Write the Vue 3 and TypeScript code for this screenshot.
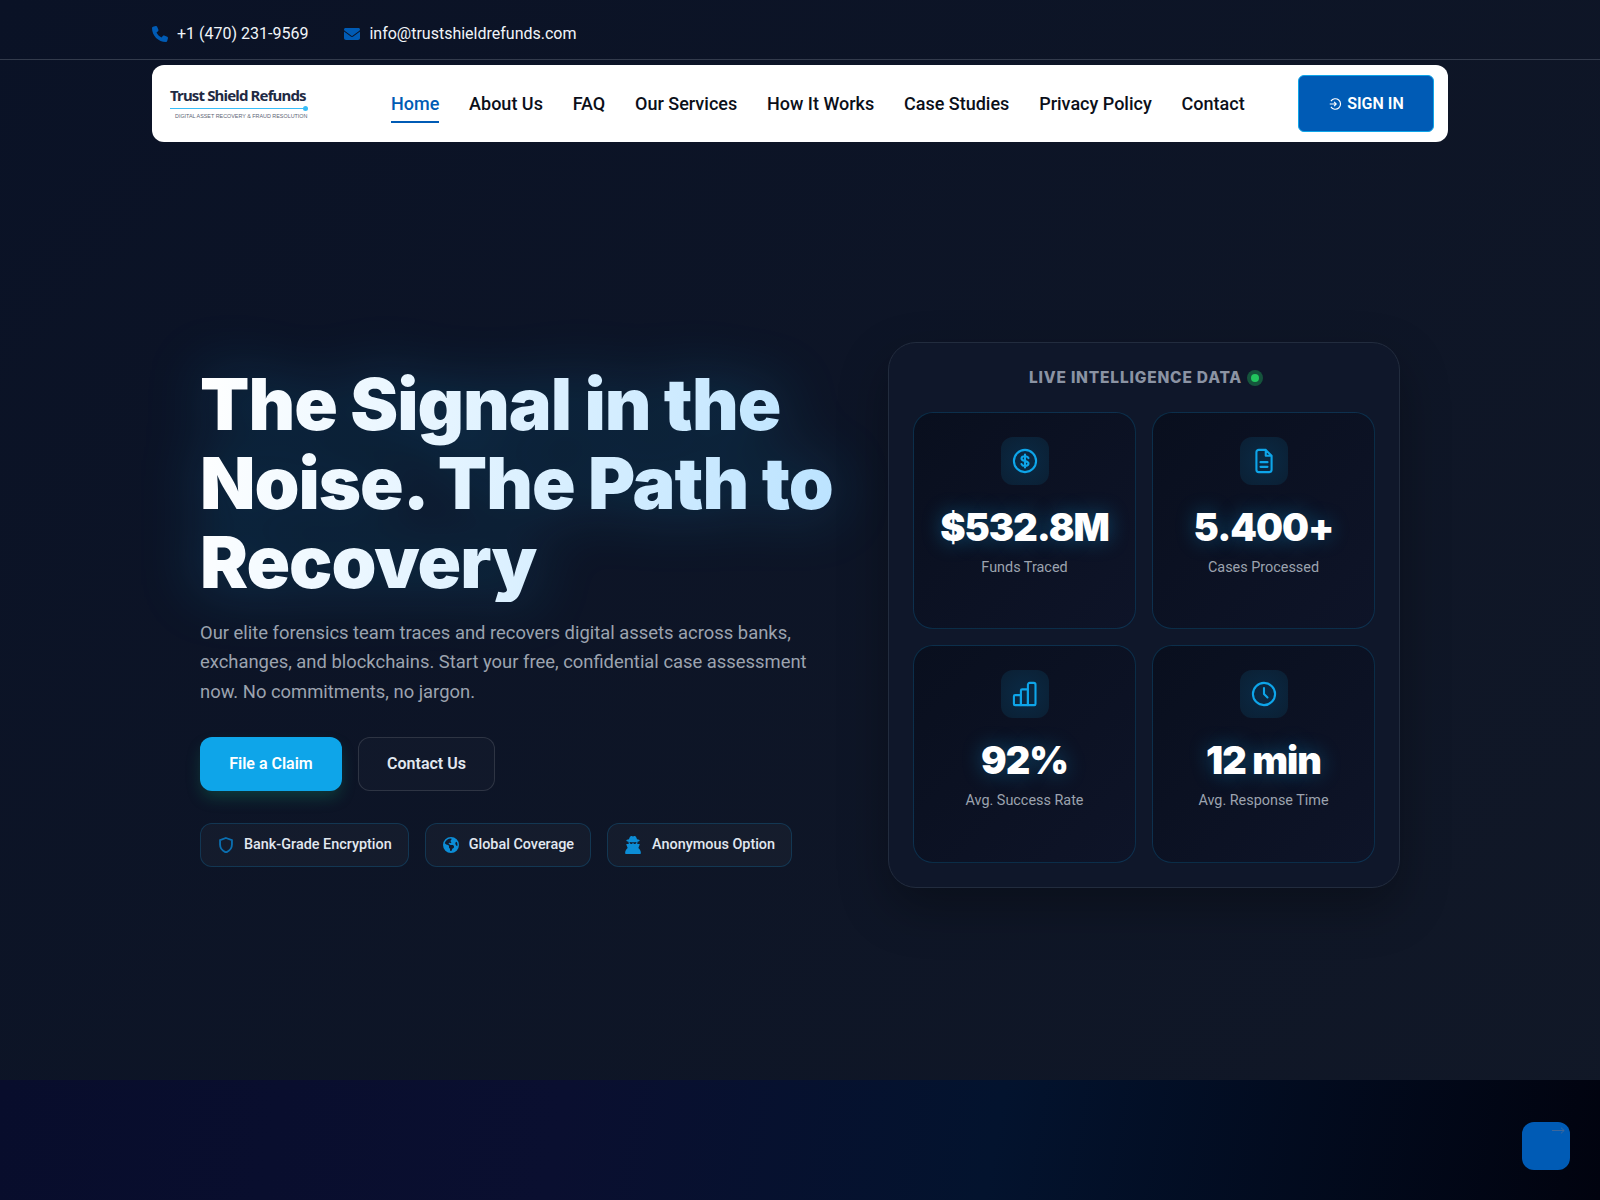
<template>
  <div class="page">
    <div class="topbar">
      <a class="topbar__item">
        <svg class="topbar__icon" viewBox="0 0 512 512"><path d="M164.9 24.6c-7.7-18.6-28-28.5-47.4-23.2l-88 24C12.1 30.2 0 46 0 64C0 311.4 200.6 512 448 512c18 0 33.8-12.1 38.6-29.5l24-88c5.3-19.4-4.6-39.7-23.2-47.4l-96-40c-16.3-6.8-35.2-2.1-46.3 11.6L304.7 368C234.3 334.7 177.3 277.7 144 207.3L193.3 167c13.7-11.2 18.4-30 11.6-46.3l-40-96z" /></svg>
        +1 (470) 231-9569
      </a>
      <a class="topbar__item">
        <svg class="topbar__icon" viewBox="0 0 512 512"><path d="M48 64C21.5 64 0 85.5 0 112c0 15.1 7.1 29.3 19.2 38.4L236.8 313.6c11.4 8.5 27 8.5 38.4 0L492.8 150.4c12.1-9.1 19.2-23.3 19.2-38.4c0-26.5-21.5-48-48-48H48zM0 176V384c0 35.3 28.7 64 64 64H448c35.3 0 64-28.7 64-64V176L294.4 339.2c-22.8 17.1-54 17.1-76.8 0L0 176z" /></svg>
        info@trustshieldrefunds.com
      </a>
    </div>

    <nav class="nav">
      <div class="logo">
        <div class="logo__name">Trust Shield Refunds</div>
        <div class="logo__rule"></div>
        <div class="logo__tag">DIGITAL ASSET RECOVERY &amp; FRAUD RESOLUTION</div>
      </div>
      <div class="nav__links">
        <a v-for="link in links" :key="link" class="nav__link" :class="{ active: link === 'Home' }">{{ link }}</a>
      </div>
      <button class="signin">
        <svg viewBox="0 0 24 24" class="signin__icon"><path d="M5 7a9 9 0 1 1 0 10M3 12h11M10.500 8.500 14 12l-3.500 3.500" /></svg>
        SIGN IN
      </button>
    </nav>

    <section class="hero">
      <div class="hero__left">
        <h1 class="hero__title">The Signal in the Noise. The Path to Recovery</h1>
        <p class="hero__text">
          Our elite forensics team traces and recovers digital assets across banks, exchanges, and blockchains. Start your free, confidential case assessment now. No commitments, no jargon.
        </p>
        <div class="hero__actions">
          <button class="btn btn--primary">File a Claim</button>
          <button class="btn btn--ghost">Contact Us</button>
        </div>
        <div class="badges">
          <div class="badge">
            <svg viewBox="3 1.500 18 21" class="badge__icon badge__icon--line"><path d="M12 2.800 19.800 5.500v6c0 5-3.300 8.500-7.800 10.300-4.500-1.800-7.800-5.300-7.800-10.300v-6z" /></svg>
            Bank-Grade Encryption
          </div>
          <div class="badge">
            <svg viewBox="0 0 512 512" class="badge__icon"><path d="M57.700 193l9.400 16.400c8.300 14.500 21.900 25.200 38 29.800L163 255.700c17.200 4.900 29 20.600 29 38.500v39.900c0 11 6.200 21 16 25.900s16 14.900 16 25.900v39c0 15.600 14.900 26.900 29.900 22.600c16.100-4.600 28.600-17.500 32.700-33.800l2.800-11.200c4.200-16.900 15.200-31.400 30.300-40l8.100-4.600c15-8.500 24.200-24.500 24.200-41.700v-8.300c0-12.700-5.100-24.900-14.100-33.900l-3.900-3.900c-9-9-21.200-14.100-33.900-14.100H257c-11.100 0-22.100-2.900-31.800-8.400l-34.500-19.700c-4.300-2.500-7.600-6.500-9.200-11.200c-3.200-9.600 1.100-20 10.200-24.500l5.900-3c6.600-3.300 14.300-3.900 21.300-1.500l23.200 7.700c8.200 2.700 17.200-.4 21.900-7.500c4.700-7 4.200-16.300-1.200-22.800l-13.600-16.300c-10-12-9.900-29.500 .3-41.300l15.700-18.300c8.800-10.300 10.200-25 3.500-36.700l-2.400-4.200c-3.500-.2-6.900-.3-10.400-.3C163.100 48 84.400 108.900 57.700 193zM464 256c0-36.800-9.600-71.400-26.400-101.500L412 164.800c-15.700 6.300-23.800 23.800-18.500 39.800l16.900 50.700c3.500 10.400 12 18.300 22.600 20.900l29.100 7.300c1.200-9 1.800-18.200 1.800-27.500zM0 256a256 256 0 1 1 512 0A256 256 0 1 1 0 256z" /></svg>
            Global Coverage
          </div>
          <div class="badge">
            <svg viewBox="0 0 448 512" class="badge__icon badge__icon--wide"><path d="M224 16c-6.700 0-10.800-2.800-15.500-6.100C201.900 5.400 194 0 176 0c-30.500 0-52 43.700-66 89.400C62.700 98.100 32 112.200 32 128c0 14.300 25 27.100 64.600 35.900c-.4 4-.6 8-.6 12.100c0 17 3.300 33.200 9.300 48H45.400C38 224 32 230 32 237.400c0 1.700 .3 3.400 1 5l38.800 96.900C28.200 371.800 0 423.800 0 482.300C0 498.700 13.300 512 29.700 512H418.300c16.400 0 29.700-13.300 29.700-29.700c0-58.500-28.200-110.400-71.700-143L415 242.400c.6-1.600 1-3.300 1-5c0-7.400-6-13.400-13.400-13.400H342.700c6-14.800 9.300-31 9.300-48c0-4.100-.2-8.100-.6-12.100C391 155.100 416 142.300 416 128c0-15.800-30.700-29.900-78-38.600C324 43.700 302.500 0 272 0c-18 0-25.900 5.400-32.500 9.900c-4.800 3.300-8.800 6.100-15.500 6.100zm56 208H267.600c-16.500 0-31.100-10.600-36.300-26.200c-2.300-7-12.200-7-14.500 0c-5.200 15.600-19.900 26.200-36.300 26.200H168c-22.100 0-40-17.900-40-40V169.600c28.200 4.100 61 6.400 96 6.400s67.800-2.300 96-6.400V184c0 22.100-17.900 40-40 40z" /></svg>
            Anonymous Option
          </div>
        </div>
      </div>

      <div class="panel">
        <div class="panel__title">LIVE INTELLIGENCE DATA <span class="panel__dot"></span></div>
        <div class="stats">
          <div v-for="stat in stats" :key="stat.label" class="stat">
            <div class="stat__icon">
              <svg viewBox="0 0 24 24">
                <path v-for="d in stat.paths" :key="d" :d="d" />
              </svg>
            </div>
            <div class="stat__value">{{ stat.value }}</div>
            <div class="stat__label">{{ stat.label }}</div>
          </div>
        </div>
      </div>
    </section>

    <section class="next">
      <button class="totop">
        <svg viewBox="0 0 16 8" class="totop__arrow"><path d="M0 4h15M11 .5 15 4l-4 3.500" /></svg>
      </button>
    </section>
  </div>
</template>

<script setup lang="ts">
interface Stat {
  value: string
  label: string
  paths: string[]
}

const links: string[] = ['Home', 'About Us', 'FAQ', 'Our Services', 'How It Works', 'Case Studies', 'Privacy Policy', 'Contact']

const stats: Stat[] = [
  {
    value: '$532.8M',
    label: 'Funds Traced',
    paths: [
      'M12 2.500a9.500 9.500 0 1 0 0 19 9.500 9.500 0 0 0 0-19z',
      'M15 9.500c-.4-1-1.500-1.600-3-1.600-1.800 0-3 .8-3 2 0 2.900 6 1.400 6 4.300 0 1.200-1.200 2-3 2-1.500 0-2.600-.6-3-1.600M12 6.500v11'
    ]
  },
  {
    value: '5.400+',
    label: 'Cases Processed',
    paths: ['M13.500 2.500H7.500a2 2 0 0 0-2 2v15a2 2 0 0 0 2 2h9a2 2 0 0 0 2-2V7.500zM13.500 2.500v5h5', 'M9 13h6M9 17h6']
  },
  {
    value: '92%',
    label: 'Avg. Success Rate',
    paths: [
      'M2.500 20.500V14a1 1 0 0 1 1-1h5v8.500h-5a1 1 0 0 1-1-1z',
      'M8.500 21.500V9a1 1 0 0 1 1-1h4a1 1 0 0 1 1 1v12.500z',
      'M14.500 21.500V4a1.500 1.500 0 0 1 1.500-1.500h3.500A1.500 1.500 0 0 1 21 4v16.500a1 1 0 0 1-1 1z'
    ]
  },
  {
    value: '12 min',
    label: 'Avg. Response Time',
    paths: ['M12 2.500a9.500 9.500 0 1 0 0 19 9.500 9.500 0 0 0 0-19z', 'M12 7v5l3 3']
  }
]
</script>

<style>
html,
body {
  margin: 0;
  background: #0a1226;
}
</style>

<style scoped>
.page {
  width: 1600px;
  height: 1200px;
  overflow: hidden;
  font-family: Roboto, sans-serif;
  background: linear-gradient(135deg, #0a1226 0%, #111827 100%);
  color: #fff;
}

.topbar {
  box-sizing: border-box;
  height: 60px;
  padding: 8px 152px 0;
  display: flex;
  align-items: center;
  gap: 36px;
  border-bottom: 1px solid #333b4c;
  font-size: 16px;
  color: #f1f5f9;
}
.topbar__item {
  display: flex;
  align-items: center;
  gap: 9px;
}
.topbar__icon {
  width: 16px;
  height: 16px;
  fill: #005bb5;
}

.nav {
  box-sizing: border-box;
  height: 77px;
  margin: 5px 152px 7px;
  padding: 0 14px 0 18px;
  background: #fff;
  border-radius: 12px;
  display: flex;
  align-items: center;
}
.logo {
  width: 138px;
  color: #1f2a44;
}
.logo__name {
  font: 700 15px/17px 'Noto Sans', sans-serif;
  letter-spacing: -0.85px;
  white-space: nowrap;
}
.logo__rule {
  width: 134px;
  height: 1px;
  margin-top: 4px;
  background: #38bdf8;
  position: relative;
}
.logo__rule::after {
  content: '';
  position: absolute;
  right: -4px;
  top: -2px;
  width: 5px;
  height: 5px;
  border-radius: 50%;
  background: #38bdf8;
}
.logo__tag {
  font: 400 5.4px/9px 'Liberation Sans', sans-serif;
  color: #5b6474;
  white-space: nowrap;
  margin-top: 3px;
  padding-left: 5px;
}
.nav__links {
  margin-left: 83px;
  display: flex;
  gap: 29.8px;
}
.nav__link {
  font-size: 18px;
  font-weight: 500;
  color: #0b0f19;
  padding: 9px 0 7px;
  border-bottom: 2px solid transparent;
}
.nav__link.active {
  color: #005bb5;
  border-bottom-color: #005bb5;
}
.signin {
  box-sizing: border-box;
  margin-left: auto;
  width: 136px;
  height: 57px;
  background: #005bb5;
  border: 1px solid #0ea5e9;
  border-radius: 6px;
  color: #fff;
  font: 600 16px Roboto, sans-serif;
  display: flex;
  align-items: center;
  justify-content: center;
  gap: 5px;
}
.signin__icon {
  width: 14px;
  height: 14px;
  fill: none;
  stroke: #fff;
  stroke-width: 2;
}

.hero {
  box-sizing: border-box;
  height: 931px;
  padding: 0 200px;
  display: grid;
  grid-template-columns: 640px 512px;
  gap: 48px;
  align-items: center;
}
.hero__left {
  margin-top: 2px;
}
.hero__title {
  margin: 0;
  font: 900 72px/79.2px Inter, sans-serif;
  letter-spacing: -1px;
  background: linear-gradient(100deg, #fff 0%, #b9e2ff 100%);
  -webkit-background-clip: text;
  background-clip: text;
  color: transparent;
  filter: drop-shadow(0 0 30px rgba(14, 165, 233, 0.3));
}
.hero__text {
  margin: 16px 0 0;
  font-size: 18.4px;
  line-height: 29.44px;
  color: #9ca3af;
}
.hero__actions {
  margin-top: 31px;
  display: flex;
  gap: 16px;
}
.btn {
  box-sizing: border-box;
  height: 54px;
  border-radius: 12px;
  font: 600 16px Roboto, sans-serif;
  color: #fff;
}
.btn--primary {
  width: 142px;
  border: none;
  background: #0ea5e9;
  box-shadow: 0 8px 16px -2px rgba(16, 185, 129, 0.25);
}
.btn--ghost {
  width: 137px;
  border: 1px solid rgba(255, 255, 255, 0.12);
  background: rgba(255, 255, 255, 0.02);
  color: #e2e8f0;
}
.badges {
  margin-top: 32px;
  display: flex;
  gap: 16px;
}
.badge {
  box-sizing: border-box;
  height: 44px;
  padding: 0 16px;
  display: flex;
  align-items: center;
  gap: 10px;
  border: 1px solid rgba(14, 165, 233, 0.2);
  border-radius: 12px;
  background: rgba(255, 255, 255, 0.03);
  font-size: 14.4px;
  font-weight: 500;
  color: #e2e8f0;
}
.badge__icon {
  width: 16px;
  height: 16px;
  margin-left: 1px;
  fill: #0c8dd6;
}
.badge__icon--line {
  fill: none;
  stroke: #0b6fb0;
  stroke-width: 2.4;
}
.badge__icon--wide {
  width: 18px;
  height: 18px;
  margin-left: 0;
}

.panel {
  box-sizing: border-box;
  height: 546px;
  padding: 24px;
  border: 1px solid #222c3e;
  border-radius: 28px;
  background: #0f172a;
  box-shadow: 0 20px 50px rgba(0, 0, 0, 0.3);
  display: flex;
  flex-direction: column;
}
.panel__title {
  height: 22px;
  display: flex;
  align-items: center;
  justify-content: center;
  gap: 5px;
  font: 800 15.5px Inter, sans-serif;
  letter-spacing: 0.8px;
  color: #8b93a3;
}
.panel__dot {
  width: 8px;
  height: 8px;
  border-radius: 50%;
  background: #22c55e;
  box-shadow: 0 0 0 4px rgba(34, 197, 94, 0.35);
  margin-left: 4px;
}
.stats {
  margin-top: 23px;
  flex: 1;
  display: grid;
  grid-template-columns: repeat(2, minmax(0, 1fr));
  grid-template-rows: 1fr 1fr;
  gap: 16px;
}
.stat {
  box-sizing: border-box;
  padding: 24px;
  border: 1px solid rgba(14, 165, 233, 0.2);
  border-radius: 20px;
  background: linear-gradient(135deg, #090f1e, #0e1428);
  display: flex;
  flex-direction: column;
  align-items: center;
}
.stat__icon {
  width: 48px;
  height: 48px;
  border-radius: 12px;
  background: radial-gradient(circle, #0a2a45 0%, #0b1f33 100%);
  display: flex;
  align-items: center;
  justify-content: center;
}
.stat__icon svg {
  width: 28px;
  height: 28px;
  fill: none;
  stroke: #0ea5e9;
  stroke-width: 1.8;
  stroke-linecap: round;
  stroke-linejoin: round;
}
.stat__value {
  margin-top: 20px;
  font: 900 38px/44px Inter, sans-serif;
  letter-spacing: -1px;
  color: #fff;
  white-space: nowrap;
  text-shadow: 0 0 20px rgba(14, 165, 233, 0.4);
}
.stat__label {
  margin-top: 10px;
  font-size: 14.4px;
  color: #9ca3af;
}

.next {
  height: 120px;
  position: relative;
  background: linear-gradient(100deg, #080d2c 0%, #0a0f30 35%, #03132e 62%, #01030f 100%);
}
.totop {
  position: absolute;
  right: 30px;
  top: 42px;
  width: 48px;
  height: 48px;
  padding: 0;
  border: none;
  border-radius: 12px;
  background: #005bb5;
}
.totop__arrow {
  position: absolute;
  top: 5px;
  right: 5px;
  width: 13px;
  height: 7px;
  fill: none;
  stroke: #4a6a96;
  stroke-width: 1;
}
</style>
